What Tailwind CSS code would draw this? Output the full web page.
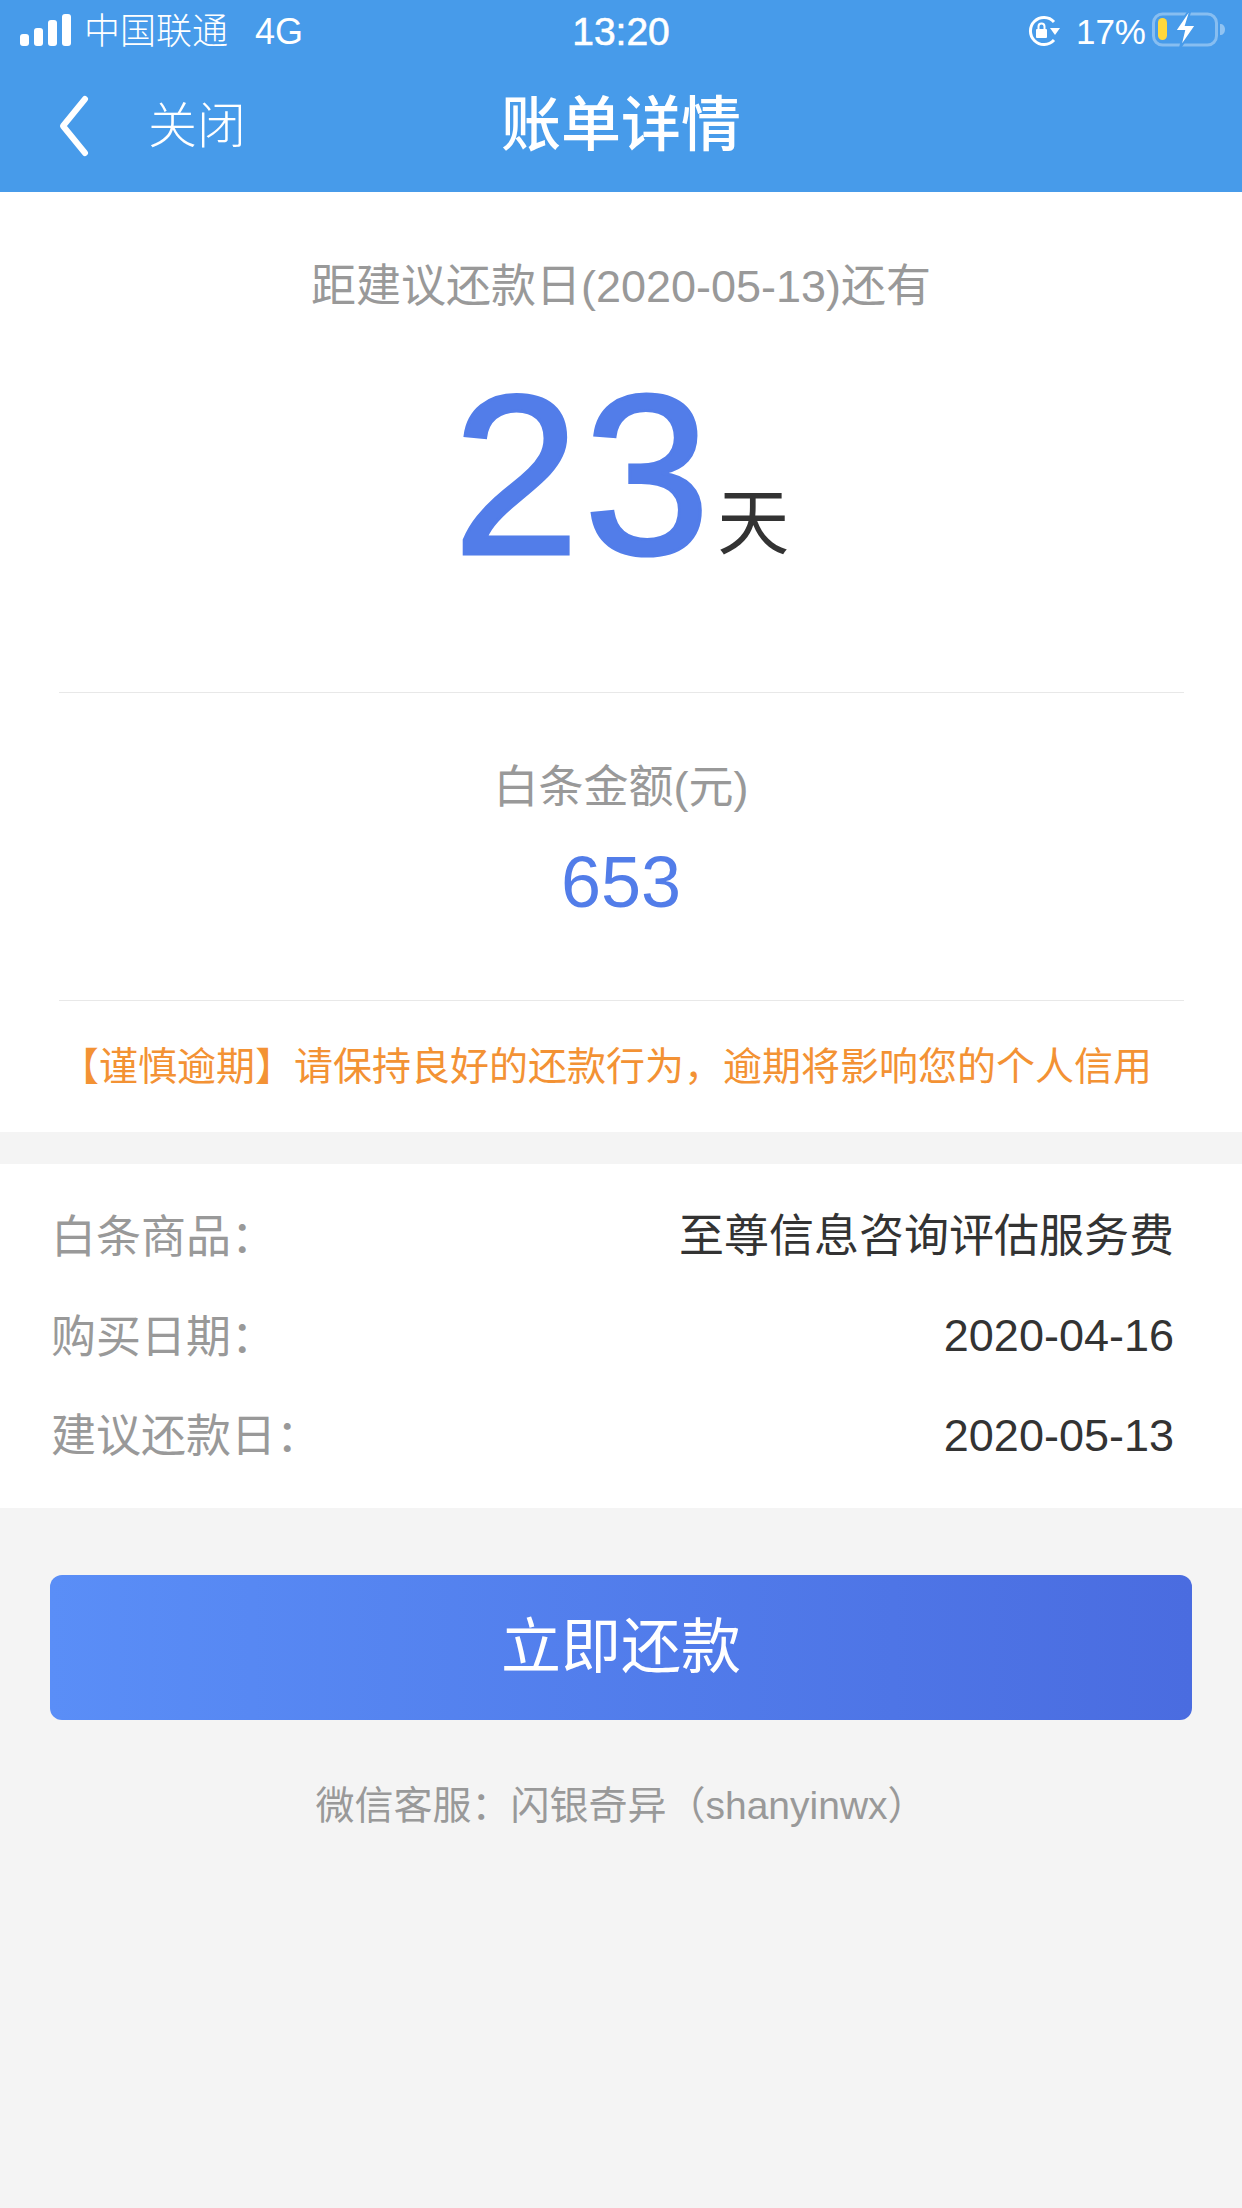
<!DOCTYPE html>
<html lang="zh-CN">
<head>
<meta charset="utf-8">
<script src="https://cdn.jsdelivr.net/npm/@tailwindcss/browser@4"></script>
</head>
<body class="w-[1242px] h-[2208px] overflow-hidden bg-[#f4f4f4] font-['Liberation_Sans','Noto_Sans_CJK_SC',sans-serif]">
<header class="h-[192px] bg-[#479bea] text-white">
  <div class="h-[60px] grid grid-cols-[1fr_auto_1fr] items-center">
    <div class="flex items-center pl-[20px]">
      <svg width="51" height="32" viewBox="0 0 51 32" fill="#fff"><rect x="0" y="20" width="9" height="12" rx="3"/><rect x="14" y="14" width="9" height="18" rx="3"/><rect x="28" y="6" width="9" height="26" rx="3"/><rect x="42" y="0" width="9" height="32" rx="3"/></svg>
      <span class="ml-[13px] mt-[3px] text-[36px] leading-[40px] font-light">中国联通</span>
      <span class="ml-[27px] mt-[3px] text-[36px] leading-[40px]">4G</span>
    </div>
    <div class="mt-[3px] text-[39px] leading-[40px] [-webkit-text-stroke:0.6px_#fff]">13:20</div>
    <div class="flex items-center justify-end pr-[16px]">
      <svg class="mt-[2px]" width="34" height="32" viewBox="0 0 34 32" fill="none"><path d="M27 7A13.500 13.500 0 1 0 27 25" stroke="#fff" stroke-width="3"/><path d="M23 13h10l-5 7z" fill="#fff"/><rect x="9" y="14" width="11" height="9" rx="1" fill="#fff"/><path d="M11.500 14v-2.500a3 3 0 0 1 6 0V14" stroke="#fff" stroke-width="2"/></svg>
      <span class="ml-[15px] mt-[3px] text-[35px] leading-[40px]">17%</span>
      <svg class="ml-[6px]" width="74" height="36" viewBox="0 0 74 36" fill="none"><rect x="1.500" y="2" width="63" height="31" rx="9" stroke="#fff" stroke-opacity=".35" stroke-width="3"/><path d="M68 12c3 0 5 2 5 5.500S71 23 68 23z" fill="#fff" fill-opacity=".4"/><rect x="6" y="6" width="9" height="22" rx="4.500" fill="#ffd83b"/><path d="M36 0 23 19h9l-4 17 16-23h-10l4-13z" fill="#fff" stroke="#479bea" stroke-width="2"/></svg>
    </div>
  </div>
  <div class="h-[132px] grid grid-cols-[1fr_auto_1fr] items-center">
    <div class="flex items-center pl-[58px]">
      <svg width="34" height="64" viewBox="0 0 34 64" fill="none"><path d="M27 5 5 32l22 27" stroke="#fff" stroke-width="6" stroke-linecap="round" stroke-linejoin="round"/></svg>
      <span class="ml-[56px] text-[49px] leading-[60px] font-light">关闭</span>
    </div>
    <h1 class="text-[60px] leading-[72px] font-medium">账单详情</h1>
    <div></div>
  </div>
</header>
<main>
  <section class="h-[940px] bg-white flex flex-col items-center">
    <p class="mt-[62px] h-[66px] text-[45px] leading-[66px] text-[#999]">距建议还款日(2020-05-13)还有</p>
    <div class="mt-[35px] h-[240px] flex items-end">
      <span class="text-[228px] leading-[240px] tracking-[4px] text-[#527de9] [-webkit-text-stroke:3px_#527de9]">23</span>
      <span class="mb-[36px] ml-[3px] text-[72px] leading-[72px] text-[#333]">天</span>
    </div>
    <div class="mt-[97px] w-[1125px] h-px bg-[#e8e8e8]"></div>
    <p class="mt-[62px] h-[66px] text-[45px] leading-[66px] text-[#999]">白条金额(元)</p>
    <p class="mt-[16px] h-[90px] text-[72px] leading-[90px] text-[#527de9]">653</p>
    <div class="mt-[73px] w-[1125px] h-px bg-[#e8e8e8]"></div>
    <p class="mt-[37px] pr-[30px] text-[39px] leading-[58px] text-[#f39234]">【谨慎逾期】请保持良好的还款行为&#xFF0C;逾期将影响您的个人信用</p>
  </section>
  <section class="mt-[32px] h-[344px] bg-white pt-[22px] pl-[51px] pr-[68px] text-[45px] leading-[100px]">
    <div class="h-[100px] flex justify-between"><span class="pt-[2px] text-[#999]">白条商品&#xFF1A;</span><span class="pt-[1px] text-[#333]">至尊信息咨询评估服务费</span></div>
    <div class="h-[100px] flex justify-between"><span class="pt-[2px] text-[#999]">购买日期&#xFF1A;</span><span class="text-[#333]">2020-04-16</span></div>
    <div class="h-[100px] flex justify-between"><span class="pt-[1px] text-[#999]">建议还款日&#xFF1A;</span><span class="text-[#333]">2020-05-13</span></div>
  </section>
  <div class="mt-[67px] mx-[50px] h-[145px] rounded-[12px] bg-gradient-to-r from-[#5a8ef7] to-[#4a6ce0] flex items-center justify-center text-white text-[60px]">立即还款</div>
  <p class="mt-[58px] text-center text-[39px] leading-[56px] text-[#999]">微信客服&#xFF1A;闪银奇异&#xFF08;shanyinwx&#xFF09;</p>
</main>
</body>
</html>
